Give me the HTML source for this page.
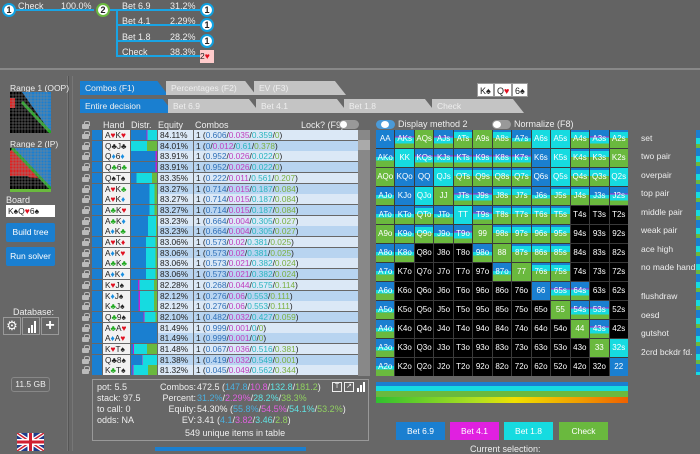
<!DOCTYPE html>
<html><head><meta charset="utf-8">
<style>
*{box-sizing:border-box;margin:0;padding:0}
body{width:700px;height:451px;overflow:hidden;background:#676767;font-family:"Liberation Sans",sans-serif;color:#eee;position:relative;font-size:9px}
.a{position:absolute}
.top{left:0;top:0;width:700px;height:70px;background:#636363;border-bottom:2px solid #888}
.node{position:absolute;width:14px;height:14px;border-radius:50%;background:#fff;border:2px solid #0fa0e0;color:#222;font-size:9px;text-align:center;line-height:10px;font-weight:bold}
.ln{position:absolute;background:#19a4e4}
.lbl{position:absolute;font-size:9px;color:#eee;white-space:nowrap}
.tab{position:absolute;height:14px;font-size:8.5px;line-height:14px;padding-left:5px;color:#f0f0f0;clip-path:polygon(0 0,88% 0,100% 100%,0 100%)}
.tb{background:#1a7fd0}.tg{background:#c4c4c4;color:#eee}
.card{position:absolute;top:83px;height:14px;background:#fff;color:#222;font-size:9px;line-height:14px;padding:0 2px;border:1px solid #999}
.r{color:#e01020}
.pu{color:#c040c0}.cy{color:#2ab5c0}.gr{color:#7ab040}.bl{color:#3070b8}
.grid{position:absolute;left:376px;top:130px;width:252px;height:246px;display:grid;grid-template-columns:repeat(13,1fr);grid-template-rows:repeat(13,1fr);gap:1px;background:#3a3a3a}
.grid div{font-size:8px;line-height:18px;text-align:center;color:#fff;overflow:hidden}
.B{background:#1a7fd0}.G{background:#6ab93e}.C{background:#16dbe0}
.bc{background:linear-gradient(#1a7fd0 0 35%,#c020d0 35% 42%,#16dbe0 42% 75%,#6ab93e 75%)}
.cg{background:linear-gradient(#1a7fd0 0 12%,#16dbe0 12% 45%,#6ab93e 45%)}
.bg{background:linear-gradient(#1a7fd0 0 45%,#16dbe0 45% 65%,#6ab93e 65%)}
.k{background:#000}
.rl{position:absolute;left:641px;font-size:8.5px;color:#eee}
.btn{position:absolute;height:18px;text-align:center;line-height:18px;font-size:8.5px;color:#fff}
.lb{position:absolute;background:#1a7fd0;color:#fff;text-align:center;font-size:8.5px;line-height:19px;border-radius:2px}
.tr{position:absolute;left:80px;width:278px;height:10.7px;font-size:8.3px;line-height:10.7px;color:#222;white-space:nowrap}
.tr>span{position:absolute;top:0;height:10px}
.l1{left:2px;width:7px}
.l1::before{content:"";position:absolute;left:0;top:4px;width:7px;height:5px;background:#bbb;border-radius:1px}
.l1::after{content:"";position:absolute;left:1.5px;top:1px;width:4px;height:4px;border:1px solid #bbb;border-bottom:none;border-radius:2px 2px 0 0}
.l2{left:12px;width:10px;background:#1a7fd0}
.l3{left:23px;width:27px;background:#f2f2f2;padding-left:2px}
.l4{left:51px;width:26px;background:#1a7fd0}
.l5{left:78px;width:35px;padding-left:2px}
.l6{left:114px;width:164px;padding-left:2px}
.ev .l5,.ev .l6{background:#dbe8f6}
.od .l5,.od .l6{background:#b8d4f0}
.ir{position:absolute;font-size:9px;white-space:nowrap}
</style></head><body>
<div class="a top"></div>
<div class="ln" style="left:14px;top:9px;width:80px;height:2px"></div>
<div class="ln" style="left:110px;top:9px;width:90px;height:2px"></div>
<div class="ln" style="left:116px;top:9px;width:2px;height:48px"></div>
<div class="ln" style="left:116px;top:24px;width:84px;height:2px"></div>
<div class="ln" style="left:116px;top:40px;width:84px;height:2px"></div>
<div class="ln" style="left:116px;top:55px;width:84px;height:2px"></div>
<div class="node" style="left:2px;top:3px">1</div>
<div class="node" style="left:96px;top:3px;border-color:#6ab93e">2</div>
<div class="node" style="left:200px;top:3px">1</div>
<div class="node" style="left:200px;top:18px">1</div>
<div class="node" style="left:200px;top:34px">1</div>
<div class="a" style="left:200px;top:50px;width:14px;height:13px;background:#fcc;color:#222;font-size:8.5px;line-height:13px">2<span class="r">♥</span></div>
<div class="lbl" style="left:18px;top:1px">Check</div><div class="lbl" style="left:61px;top:1px">100.0%</div>
<div class="lbl" style="left:122px;top:1px">Bet 6.9</div><div class="lbl" style="left:170px;top:1px">31.2%</div>
<div class="lbl" style="left:122px;top:16px">Bet 4.1</div><div class="lbl" style="left:170px;top:16px">2.29%</div>
<div class="lbl" style="left:122px;top:32px">Bet 1.8</div><div class="lbl" style="left:170px;top:32px">28.2%</div>
<div class="lbl" style="left:122px;top:47px">Check</div><div class="lbl" style="left:170px;top:47px">38.3%</div>
<div class="a" style="left:67px;top:76px;width:2px;height:375px;background:#555;border-left:1px solid #777"></div>
<div class="a" style="left:72px;top:76px;width:1px;height:375px;background:#777"></div>
<div class="lbl" style="left:10px;top:83px;font-size:8.5px">Range 1 (OOP)</div>
<svg class="a" style="left:10px;top:92px" width="41" height="41"><rect width="41" height="41" fill="#000"/><polygon points="12,0 41,0 41,41" fill="#1a7fd0"/><rect x="0" y="6" width="5" height="10" fill="#e02020"/><line x1="12" y1="10" x2="41" y2="41" stroke="#2a2" stroke-width="3"/><g stroke="#888" stroke-width=".5"><path d="M3 0V41M6 0V41M9 0V41M12 0V41M15 0V41M18 0V41M21 0V41M25 0V41M28 0V41M31 0V41M34 0V41M37 0V41M0 3H41M0 6H41M0 9H41M0 12H41M0 15H41M0 18H41M0 21H41M0 25H41M0 28H41M0 31H41M0 34H41M0 37H41"/></g></svg>
<div class="lbl" style="left:10px;top:139px;font-size:8.5px">Range 2 (IP)</div>
<svg class="a" style="left:10px;top:148px" width="41" height="45"><rect width="41" height="41" fill="#000"/><polygon points="4,0 41,0 41,41 18,18" fill="#1a7fd0"/><polygon points="0,3 4,0 28,30 0,28" fill="#e02020"/><polygon points="0,28 18,28 28,41 0,41" fill="#000"/><line x1="2" y1="0" x2="41" y2="41" stroke="#2a2" stroke-width="3"/><g stroke="#888" stroke-width=".5"><path d="M3 0V41M6 0V41M9 0V41M12 0V41M15 0V41M18 0V41M21 0V41M25 0V41M28 0V41M31 0V41M34 0V41M37 0V41M0 3H41M0 6H41M0 9H41M0 12H41M0 15H41M0 18H41M0 21H41M0 25H41M0 28H41M0 31H41M0 34H41M0 37H41"/></g><rect y="41" width="41" height="3" fill="#6ab93e"/></svg>
<div class="lbl" style="left:6px;top:195px">Board</div>
<div class="a" style="left:6px;top:205px;width:49px;height:12px;background:#fff;color:#222;font-size:8.5px;line-height:12px;padding-left:2px">K♠Q<span class="r">♥</span>6♠</div>
<div class="lb" style="left:6px;top:223px;width:49px">Build tree</div>
<div class="lb" style="left:6px;top:247px;width:49px">Run solver</div>
<div class="lbl" style="left:13px;top:307px">Database:</div>
<div class="a" style="left:3px;top:317px;width:18px;height:18px;border:1px solid #999;color:#fff;font-size:13px;text-align:center;line-height:16px">⚙</div>
<div class="a" style="left:22px;top:317px;width:18px;height:18px;border:1px solid #999"><div class="a" style="left:5px;top:10px;width:2px;height:5px;background:#fff"></div><div class="a" style="left:8px;top:7px;width:2px;height:8px;background:#fff"></div><div class="a" style="left:11px;top:3px;width:2px;height:12px;background:#fff"></div></div>
<div class="a" style="left:41px;top:317px;width:18px;height:18px;border:1px solid #999;color:#fff;font-size:16px;text-align:center;line-height:16px;font-weight:bold">+</div>
<div class="a" style="left:11px;top:377px;width:39px;height:15px;border:1px solid #888;border-radius:3px;text-align:center;line-height:13px;font-size:8.5px">11.5 GB</div>
<svg class="a" style="left:17px;top:433px" width="27" height="18"><rect width="27" height="18" fill="#1f3c8c"/><path d="M0 0L27 18M27 0L0 18" stroke="#fff" stroke-width="4"/><path d="M0 0L27 18M27 0L0 18" stroke="#d02030" stroke-width="1.5"/><path d="M13.5 0V18M0 9H27" stroke="#fff" stroke-width="6"/><path d="M13.5 0V18M0 9H27" stroke="#d02030" stroke-width="3"/></svg>
<div class="tab tb" style="left:80px;top:81px;width:88px">Combos (F1)</div>
<div class="tab tg" style="left:166px;top:81px;width:90px">Percentages (F2)</div>
<div class="tab tg" style="left:254px;top:81px;width:92px">EV (F3)</div>
<div class="tab tb" style="left:80px;top:99px;width:94px">Entire decision</div>
<div class="tab tg" style="left:168px;top:99px;width:92px">Bet 6.9</div>
<div class="tab tg" style="left:256px;top:99px;width:92px">Bet 4.1</div>
<div class="tab tg" style="left:344px;top:99px;width:92px">Bet 1.8</div>
<div class="tab tg" style="left:432px;top:99px;width:92px">Check</div>
<div class="card" style="left:477px">K♠</div><div class="card" style="left:494px">Q<span class="r">♥</span></div><div class="card" style="left:512px">6♠</div>
<div class="tr" style="top:120px;color:#eee"><span class="l1"></span></div>
<div class="lbl" style="left:103px;top:120px">Hand</div><div class="lbl" style="left:131px;top:120px">Distr.</div><div class="lbl" style="left:158px;top:120px">Equity</div><div class="lbl" style="left:195px;top:120px">Combos</div>
<div class="lbl" style="left:301px;top:120px">Lock? (F9)</div>
<div class="a" style="left:339px;top:120px;width:20px;height:9px;border-radius:5px;background:#999"><div class="a" style="left:1px;top:1px;width:7px;height:7px;border-radius:50%;background:#fff"></div></div>
<div class="a" style="left:358px;top:130px;width:12px;height:246px;background:#888"><div class="a" style="left:0;top:10px;width:12px;height:10px;background:#aaa"></div></div>
<div class="tr ev" style="top:130px"><span class="l1"></span><span class="l2"></span><span class="l3">A<span class="r">♥</span>K<span class="r">♥</span></span><span class="l4" style="background:linear-gradient(90deg,#1a7fd0 0 60%,#c020d0 60% 64%,#16dbe0 64%)"></span><span class="l5">84.11%</span><span class="l6">1 (<span class="bl">0.606</span>/<span class="pu">0.035</span>/<span class="cy">0.359</span>/<span class="gr">0</span>)</span></div>
<div class="tr od" style="top:140.7px"><span class="l1"></span><span class="l2"></span><span class="l3">Q♣J♣</span><span class="l4" style="background:linear-gradient(90deg,#16dbe0 0 62%,#6ab93e 62%)"></span><span class="l5">84.01%</span><span class="l6">1 (<span class="bl">0</span>/<span class="pu">0.012</span>/<span class="cy">0.61</span>/<span class="gr">0.378</span>)</span></div>
<div class="tr ev" style="top:151.4px"><span class="l1"></span><span class="l2"></span><span class="l3">Q<span style="color:#1a8fe0">♦</span>6<span style="color:#1a8fe0">♦</span></span><span class="l4" style="background:linear-gradient(90deg,#1a7fd0 0 95%,#c020d0 95%)"></span><span class="l5">83.91%</span><span class="l6">1 (<span class="bl">0.952</span>/<span class="pu">0.026</span>/<span class="cy">0.022</span>/<span class="gr">0</span>)</span></div>
<div class="tr od" style="top:162.1px"><span class="l1"></span><span class="l2"></span><span class="l3">Q<span style="color:#2a2">♣</span>6<span style="color:#2a2">♣</span></span><span class="l4" style="background:linear-gradient(90deg,#1a7fd0 0 95%,#c020d0 95%)"></span><span class="l5">83.91%</span><span class="l6">1 (<span class="bl">0.952</span>/<span class="pu">0.026</span>/<span class="cy">0.022</span>/<span class="gr">0</span>)</span></div>
<div class="tr ev" style="top:172.8px"><span class="l1"></span><span class="l2"></span><span class="l3">Q♠T♠</span><span class="l4" style="background:linear-gradient(90deg,#1a7fd0 0 22%,#16dbe0 22% 80%,#6ab93e 80%)"></span><span class="l5">83.35%</span><span class="l6">1 (<span class="bl">0.222</span>/<span class="pu">0.011</span>/<span class="cy">0.561</span>/<span class="gr">0.207</span>)</span></div>
<div class="tr od" style="top:183.5px"><span class="l1"></span><span class="l2"></span><span class="l3">A<span class="r">♥</span>K<span style="color:#2a2">♣</span></span><span class="l4" style="background:linear-gradient(90deg,#1a7fd0 0 71%,#16dbe0 71% 91%,#6ab93e 91%)"></span><span class="l5">83.27%</span><span class="l6">1 (<span class="bl">0.714</span>/<span class="pu">0.015</span>/<span class="cy">0.187</span>/<span class="gr">0.084</span>)</span></div>
<div class="tr ev" style="top:194.2px"><span class="l1"></span><span class="l2"></span><span class="l3">A<span class="r">♥</span>K<span style="color:#1a8fe0">♦</span></span><span class="l4" style="background:linear-gradient(90deg,#1a7fd0 0 71%,#16dbe0 71% 91%,#6ab93e 91%)"></span><span class="l5">83.27%</span><span class="l6">1 (<span class="bl">0.714</span>/<span class="pu">0.015</span>/<span class="cy">0.187</span>/<span class="gr">0.084</span>)</span></div>
<div class="tr od" style="top:204.9px"><span class="l1"></span><span class="l2"></span><span class="l3">A<span style="color:#2a2">♣</span>K<span class="r">♥</span></span><span class="l4" style="background:linear-gradient(90deg,#1a7fd0 0 71%,#16dbe0 71% 91%,#6ab93e 91%)"></span><span class="l5">83.27%</span><span class="l6">1 (<span class="bl">0.714</span>/<span class="pu">0.015</span>/<span class="cy">0.187</span>/<span class="gr">0.084</span>)</span></div>
<div class="tr ev" style="top:215.6px"><span class="l1"></span><span class="l2"></span><span class="l3">A<span style="color:#2a2">♣</span>K<span style="color:#1a8fe0">♦</span></span><span class="l4" style="background:linear-gradient(90deg,#1a7fd0 0 66%,#16dbe0 66% 96%,#6ab93e 96%)"></span><span class="l5">83.23%</span><span class="l6">1 (<span class="bl">0.664</span>/<span class="pu">0.004</span>/<span class="cy">0.305</span>/<span class="gr">0.027</span>)</span></div>
<div class="tr od" style="top:226.3px"><span class="l1"></span><span class="l2"></span><span class="l3">A<span style="color:#1a8fe0">♦</span>K<span style="color:#2a2">♣</span></span><span class="l4" style="background:linear-gradient(90deg,#1a7fd0 0 66%,#16dbe0 66% 96%,#6ab93e 96%)"></span><span class="l5">83.23%</span><span class="l6">1 (<span class="bl">0.664</span>/<span class="pu">0.004</span>/<span class="cy">0.305</span>/<span class="gr">0.027</span>)</span></div>
<div class="tr ev" style="top:237px"><span class="l1"></span><span class="l2"></span><span class="l3">A<span class="r">♥</span>K<span class="r">♦</span></span><span class="l4" style="background:linear-gradient(90deg,#1a7fd0 0 57%,#16dbe0 57% 95%,#6ab93e 95%)"></span><span class="l5">83.06%</span><span class="l6">1 (<span class="bl">0.573</span>/<span class="pu">0.02</span>/<span class="cy">0.381</span>/<span class="gr">0.025</span>)</span></div>
<div class="tr od" style="top:247.7px"><span class="l1"></span><span class="l2"></span><span class="l3">A<span style="color:#1a8fe0">♦</span>K<span class="r">♥</span></span><span class="l4" style="background:linear-gradient(90deg,#1a7fd0 0 57%,#16dbe0 57% 95%,#6ab93e 95%)"></span><span class="l5">83.06%</span><span class="l6">1 (<span class="bl">0.573</span>/<span class="pu">0.02</span>/<span class="cy">0.381</span>/<span class="gr">0.025</span>)</span></div>
<div class="tr ev" style="top:258.4px"><span class="l1"></span><span class="l2"></span><span class="l3">A<span style="color:#2a2">♣</span>K<span style="color:#2a2">♣</span></span><span class="l4" style="background:linear-gradient(90deg,#1a7fd0 0 57%,#16dbe0 57% 95%,#6ab93e 95%)"></span><span class="l5">83.06%</span><span class="l6">1 (<span class="bl">0.573</span>/<span class="pu">0.021</span>/<span class="cy">0.382</span>/<span class="gr">0.024</span>)</span></div>
<div class="tr od" style="top:269.1px"><span class="l1"></span><span class="l2"></span><span class="l3">A<span style="color:#1a8fe0">♦</span>K<span style="color:#1a8fe0">♦</span></span><span class="l4" style="background:linear-gradient(90deg,#1a7fd0 0 57%,#16dbe0 57% 95%,#6ab93e 95%)"></span><span class="l5">83.06%</span><span class="l6">1 (<span class="bl">0.573</span>/<span class="pu">0.021</span>/<span class="cy">0.382</span>/<span class="gr">0.024</span>)</span></div>
<div class="tr ev" style="top:279.8px"><span class="l1"></span><span class="l2"></span><span class="l3">K<span class="r">♥</span>J♠</span><span class="l4" style="background:linear-gradient(90deg,#1a7fd0 0 27%,#c020d0 27% 32%,#16dbe0 32% 89%,#6ab93e 89%)"></span><span class="l5">82.28%</span><span class="l6">1 (<span class="bl">0.268</span>/<span class="pu">0.044</span>/<span class="cy">0.575</span>/<span class="gr">0.114</span>)</span></div>
<div class="tr od" style="top:290.5px"><span class="l1"></span><span class="l2"></span><span class="l3">K<span style="color:#1a8fe0">♦</span>J♠</span><span class="l4" style="background:linear-gradient(90deg,#1a7fd0 0 28%,#c020d0 28% 34%,#16dbe0 34% 89%,#6ab93e 89%)"></span><span class="l5">82.12%</span><span class="l6">1 (<span class="bl">0.276</span>/<span class="pu">0.06</span>/<span class="cy">0.553</span>/<span class="gr">0.111</span>)</span></div>
<div class="tr ev" style="top:301.2px"><span class="l1"></span><span class="l2"></span><span class="l3">K<span style="color:#2a2">♣</span>J♠</span><span class="l4" style="background:linear-gradient(90deg,#1a7fd0 0 28%,#c020d0 28% 34%,#16dbe0 34% 89%,#6ab93e 89%)"></span><span class="l5">82.12%</span><span class="l6">1 (<span class="bl">0.276</span>/<span class="pu">0.06</span>/<span class="cy">0.553</span>/<span class="gr">0.111</span>)</span></div>
<div class="tr od" style="top:311.9px"><span class="l1"></span><span class="l2"></span><span class="l3">Q<span style="color:#2a2">♣</span>9♠</span><span class="l4" style="background:linear-gradient(90deg,#1a7fd0 0 48%,#c020d0 48% 52%,#16dbe0 52% 95%,#6ab93e 95%)"></span><span class="l5">82.10%</span><span class="l6">1 (<span class="bl">0.482</span>/<span class="pu">0.032</span>/<span class="cy">0.427</span>/<span class="gr">0.059</span>)</span></div>
<div class="tr ev" style="top:322.6px"><span class="l1"></span><span class="l2"></span><span class="l3">A<span style="color:#2a2">♣</span>A<span class="r">♥</span></span><span class="l4"></span><span class="l5">81.49%</span><span class="l6">1 (<span class="bl">0.999</span>/<span class="pu">0.001</span>/<span class="cy">0</span>/<span class="gr">0</span>)</span></div>
<div class="tr od" style="top:333.3px"><span class="l1"></span><span class="l2"></span><span class="l3">A<span style="color:#1a8fe0">♦</span>A<span class="r">♥</span></span><span class="l4"></span><span class="l5">81.49%</span><span class="l6">1 (<span class="bl">0.999</span>/<span class="pu">0.001</span>/<span class="cy">0</span>/<span class="gr">0</span>)</span></div>
<div class="tr ev" style="top:344px"><span class="l1"></span><span class="l2"></span><span class="l3">K<span class="r">♥</span>T♠</span><span class="l4" style="background:linear-gradient(90deg,#1a7fd0 0 7%,#c020d0 7% 11%,#16dbe0 11% 62%,#6ab93e 62%)"></span><span class="l5">81.48%</span><span class="l6">1 (<span class="bl">0.067</span>/<span class="pu">0.036</span>/<span class="cy">0.516</span>/<span class="gr">0.381</span>)</span></div>
<div class="tr od" style="top:354.7px"><span class="l1"></span><span class="l2"></span><span class="l3">Q♣8♠</span><span class="l4" style="background:linear-gradient(90deg,#1a7fd0 0 42%,#c020d0 42% 45%,#16dbe0 45%)"></span><span class="l5">81.38%</span><span class="l6">1 (<span class="bl">0.419</span>/<span class="pu">0.032</span>/<span class="cy">0.549</span>/<span class="gr">0.001</span>)</span></div>
<div class="tr ev" style="top:365.4px"><span class="l1"></span><span class="l2"></span><span class="l3">K<span style="color:#2a2">♣</span>T♠</span><span class="l4" style="background:linear-gradient(90deg,#1a7fd0 0 5%,#c020d0 5% 10%,#16dbe0 10% 66%,#6ab93e 66%)"></span><span class="l5">81.32%</span><span class="l6">1 (<span class="bl">0.045</span>/<span class="pu">0.049</span>/<span class="cy">0.562</span>/<span class="gr">0.344</span>)</span></div>
<!-- info panel -->
<div class="a" style="left:92px;top:379px;width:277px;height:62px;border:1px solid #999"></div>
<div class="lbl" style="left:97px;top:382px;line-height:11px">pot: 5.5<br>stack: 97.5<br>to call: 0<br>odds: NA</div>
<div class="ir" style="left:120px;width:76px;text-align:right;top:382px;line-height:11px">Combos:<br>Percent:<br>Equity:<br>EV:</div>
<div class="ir" style="left:197px;top:382px;line-height:11px">472.5 (<span style="color:#4ab0e0">147.8</span>/<span style="color:#e060e0">10.8</span>/<span style="color:#60e0e0">132.8</span>/<span style="color:#90d060">181.2</span>)<br><span style="color:#4ab0e0">31.2%</span>/<span style="color:#e060e0">2.29%</span>/<span style="color:#60e0e0">28.2%</span>/<span style="color:#90d060">38.3%</span><br>54.30% (<span style="color:#4ab0e0">55.8%</span>/<span style="color:#e060e0">54.5%</span>/<span style="color:#60e0e0">54.1%</span>/<span style="color:#90d060">53.2%</span>)<br>3.41 (<span style="color:#4ab0e0">4.1</span>/<span style="color:#e060e0">3.82</span>/<span style="color:#60e0e0">3.46</span>/<span style="color:#90d060">2.8</span>)</div>
<div class="lbl" style="left:185px;top:428px">549 unique items in table</div>
<div class="a" style="left:332px;top:382px;width:10px;height:10px;border:1px solid #eee;font-size:7px;text-align:center;line-height:8px">T</div>
<div class="a" style="left:344px;top:382px;width:10px;height:10px;border:1px solid #eee;font-size:7px;text-align:center;line-height:8px">↗</div>
<div class="a" style="left:357px;top:388px;width:2px;height:4px;background:#fff"></div><div class="a" style="left:360px;top:385px;width:2px;height:7px;background:#fff"></div><div class="a" style="left:363px;top:382px;width:2px;height:10px;background:#fff"></div>
<div class="a" style="left:155px;top:447px;width:151px;height:4px;background:#1a7fd0"></div>
<div class="a" style="left:376px;top:120px;width:19px;height:9px;border-radius:5px;background:#4a9ad8"><div class="a" style="left:5px;top:1px;width:8px;height:7px;border-radius:50%;background:#fff"></div></div>
<div class="lbl" style="left:398px;top:119px">Display method 2</div>
<div class="a" style="left:492px;top:120px;width:19px;height:9px;border-radius:5px;background:#999"><div class="a" style="left:1px;top:1px;width:8px;height:7px;border-radius:50%;background:#fff"></div></div>
<div class="lbl" style="left:514px;top:119px">Normalize (F8)</div>
<div class="grid">
<div class="B">AA</div><div class="bc">AKs</div><div class="G">AQs</div><div class="bc">AJs</div><div class="cg">ATs</div><div class="G">A9s</div><div class="cg">A8s</div><div class="bg">A7s</div><div class="C">A6s</div><div class="C">A5s</div><div class="cg">A4s</div><div class="bc">A3s</div><div class="cg">A2s</div>
<div class="bg">AKo</div><div class="C">KK</div><div class="bc">KQs</div><div class="bc">KJs</div><div class="bc">KTs</div><div class="bc">K9s</div><div class="bc">K8s</div><div class="bc">K7s</div><div class="B">K6s</div><div class="C">K5s</div><div class="cg">K4s</div><div class="cg">K3s</div><div class="G">K2s</div>
<div class="G">AQo</div><div class="B">KQo</div><div class="B">QQ</div><div class="C">QJs</div><div class="cg">QTs</div><div class="cg">Q9s</div><div class="cg">Q8s</div><div class="cg">Q7s</div><div class="B">Q6s</div><div class="C">Q5s</div><div class="cg">Q4s</div><div class="cg">Q3s</div><div class="C">Q2s</div>
<div class="bg">AJo</div><div class="B">KJo</div><div class="C">QJo</div><div class="G">JJ</div><div class="bc">JTs</div><div class="bc">J9s</div><div class="cg">J8s</div><div class="cg">J7s</div><div class="bg">J6s</div><div class="cg">J5s</div><div class="cg">J4s</div><div class="bg">J3s</div><div class="bc">J2s</div>
<div class="bg">ATo</div><div class="bg">KTo</div><div class="cg">QTo</div><div class="bg">JTo</div><div class="C">TT</div><div class="bc">T9s</div><div class="cg">T8s</div><div class="cg">T7s</div><div class="cg">T6s</div><div class="cg">T5s</div><div class="k">T4s</div><div class="k">T3s</div><div class="k">T2s</div>
<div class="G">A9o</div><div class="bg">K9o</div><div class="cg">Q9o</div><div class="bg">J9o</div><div class="bc">T9o</div><div class="G">99</div><div class="cg">98s</div><div class="cg">97s</div><div class="cg">96s</div><div class="cg">95s</div><div class="k">94s</div><div class="k">93s</div><div class="k">92s</div>
<div class="bg">A8o</div><div class="bg">K8o</div><div class="k">Q8o</div><div class="k">J8o</div><div class="k">T8o</div><div class="bg">98o</div><div class="G">88</div><div class="cg">87s</div><div class="cg">86s</div><div class="cg">85s</div><div class="k">84s</div><div class="k">83s</div><div class="k">82s</div>
<div class="bg">A7o</div><div class="k">K7o</div><div class="k">Q7o</div><div class="k">J7o</div><div class="k">T7o</div><div class="k">97o</div><div class="bg">87o</div><div class="G">77</div><div class="cg">76s</div><div class="cg">75s</div><div class="k">74s</div><div class="k">73s</div><div class="k">72s</div>
<div class="bg">A6o</div><div class="k">K6o</div><div class="k">Q6o</div><div class="k">J6o</div><div class="k">T6o</div><div class="k">96o</div><div class="k">86o</div><div class="k">76o</div><div class="B">66</div><div class="bc">65s</div><div class="bc">64s</div><div class="k">63s</div><div class="k">62s</div>
<div class="bg">A5o</div><div class="k">K5o</div><div class="k">Q5o</div><div class="k">J5o</div><div class="k">T5o</div><div class="k">95o</div><div class="k">85o</div><div class="k">75o</div><div class="k">65o</div><div class="G">55</div><div class="bc">54s</div><div class="bc">53s</div><div class="k">52s</div>
<div class="bg">A4o</div><div class="k">K4o</div><div class="k">Q4o</div><div class="k">J4o</div><div class="k">T4o</div><div class="k">94o</div><div class="k">84o</div><div class="k">74o</div><div class="k">64o</div><div class="k">54o</div><div class="G">44</div><div class="bc">43s</div><div class="k">42s</div>
<div class="bg">A3o</div><div class="k">K3o</div><div class="k">Q3o</div><div class="k">J3o</div><div class="k">T3o</div><div class="k">93o</div><div class="k">83o</div><div class="k">73o</div><div class="k">63o</div><div class="k">53o</div><div class="k">43o</div><div class="G">33</div><div class="C">32s</div>
<div class="bg">A2o</div><div class="k">K2o</div><div class="k">Q2o</div><div class="k">J2o</div><div class="k">T2o</div><div class="k">92o</div><div class="k">82o</div><div class="k">72o</div><div class="k">62o</div><div class="k">52o</div><div class="k">42o</div><div class="k">32o</div><div class="B">22</div>
</div>
<div class="rl" style="top:133px">set</div><div class="rl" style="top:151px">two pair</div><div class="rl" style="top:170px">overpair</div><div class="rl" style="top:188px">top pair</div><div class="rl" style="top:207px">middle pair</div><div class="rl" style="top:225px">weak pair</div><div class="rl" style="top:244px">ace high</div><div class="rl" style="top:262px">no made hand</div><div class="rl" style="top:291px">flushdraw</div><div class="rl" style="top:310px">oesd</div><div class="rl" style="top:328px">gutshot</div><div class="rl" style="top:347px">2crd bckdr fd.</div>
<div class="a" style="left:696px;top:130px;width:4px;height:245px;background:repeating-linear-gradient(#1a7fd0 0 8px,#16dbe0 8px 14px,#6ab93e 14px 18px)"></div>
<div class="a" style="left:376px;top:382px;width:252px;height:16px;background:linear-gradient(#1a7fd0 0 25%,#16dbe0 25% 55%,#6ab93e 55%)"></div>
<div class="a" style="left:376px;top:397px;width:252px;height:6px;background:linear-gradient(90deg,#30c030,#b0e020 40%,#f0e000 55%,#f0a000 80%,#f06000)"></div>
<div class="btn" style="left:396px;top:422px;width:49px;background:#1a7fd0">Bet 6.9</div>
<div class="btn" style="left:450px;top:422px;width:49px;background:#e020e0">Bet 4.1</div>
<div class="btn" style="left:504px;top:422px;width:49px;background:#16dbe0">Bet 1.8</div>
<div class="btn" style="left:559px;top:422px;width:49px;background:#6ab93e">Check</div>
<div class="lbl" style="left:470px;top:444px">Current selection:</div>
</body></html>
